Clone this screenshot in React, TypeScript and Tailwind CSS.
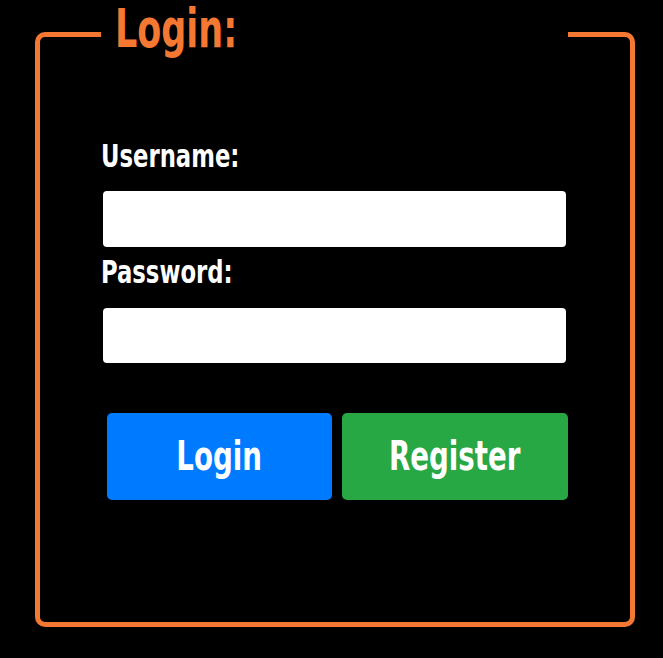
import React from 'react';

const font = "font-['Liberation_Sans_Narrow','DejaVu_Sans_Condensed',sans-serif] font-bold";

const App: React.FC = () => {
  return (
    <div className="w-[663px] h-[658px] bg-black overflow-hidden">
      {/* ───── login box ───── */}
      <fieldset className="ml-[35px] w-[600px] h-[627px] border-[5px] border-[#f47832] rounded-[10px] pl-[61px] pr-[60px] pt-[72px]">
        <legend className={`${font} w-[467px] px-[14px] pb-[10px] text-[54px] leading-[58px] text-[#f47832]`}>
          <span className="inline-block origin-left scale-x-[0.72]">Login:</span>
        </legend>

        <form className="flex flex-col" onSubmit={e => e.preventDefault()}>
          {/* 아이디 */}
          <label className={`${font} text-[32px] leading-none text-white`}>
            <span className="inline-block origin-left scale-x-[0.79]">Username:</span>
          </label>
          <input
            type="text"
            className="mt-[19px] ml-[2px] w-[463px] h-[56px] bg-white rounded-[4px] outline-none px-3"
          />

          {/* 비밀번호 */}
          <label className={`${font} mt-[9px] text-[32px] leading-none text-white`}>
            <span className="inline-block origin-left scale-x-[0.79]">Password:</span>
          </label>
          <input
            type="password"
            className="mt-[20px] ml-[2px] w-[463px] h-[55px] bg-white rounded-[4px] outline-none px-3"
          />

          {/* 버튼 */}
          <div className="flex gap-[10px] mt-[50px] ml-[6px]">
            <button
              type="submit"
              className={`${font} w-[225px] h-[87px] bg-[#007bff] rounded-[5px] text-[41px] text-white`}
            >
              <span className="inline-block scale-x-[0.75]">Login</span>
            </button>
            <button
              type="button"
              className={`${font} w-[226px] h-[87px] bg-[#28a745] rounded-[5px] text-[41px] text-white`}
            >
              <span className="inline-block scale-x-[0.75]">Register</span>
            </button>
          </div>
        </form>
      </fieldset>
    </div>
  );
};

export default App;
